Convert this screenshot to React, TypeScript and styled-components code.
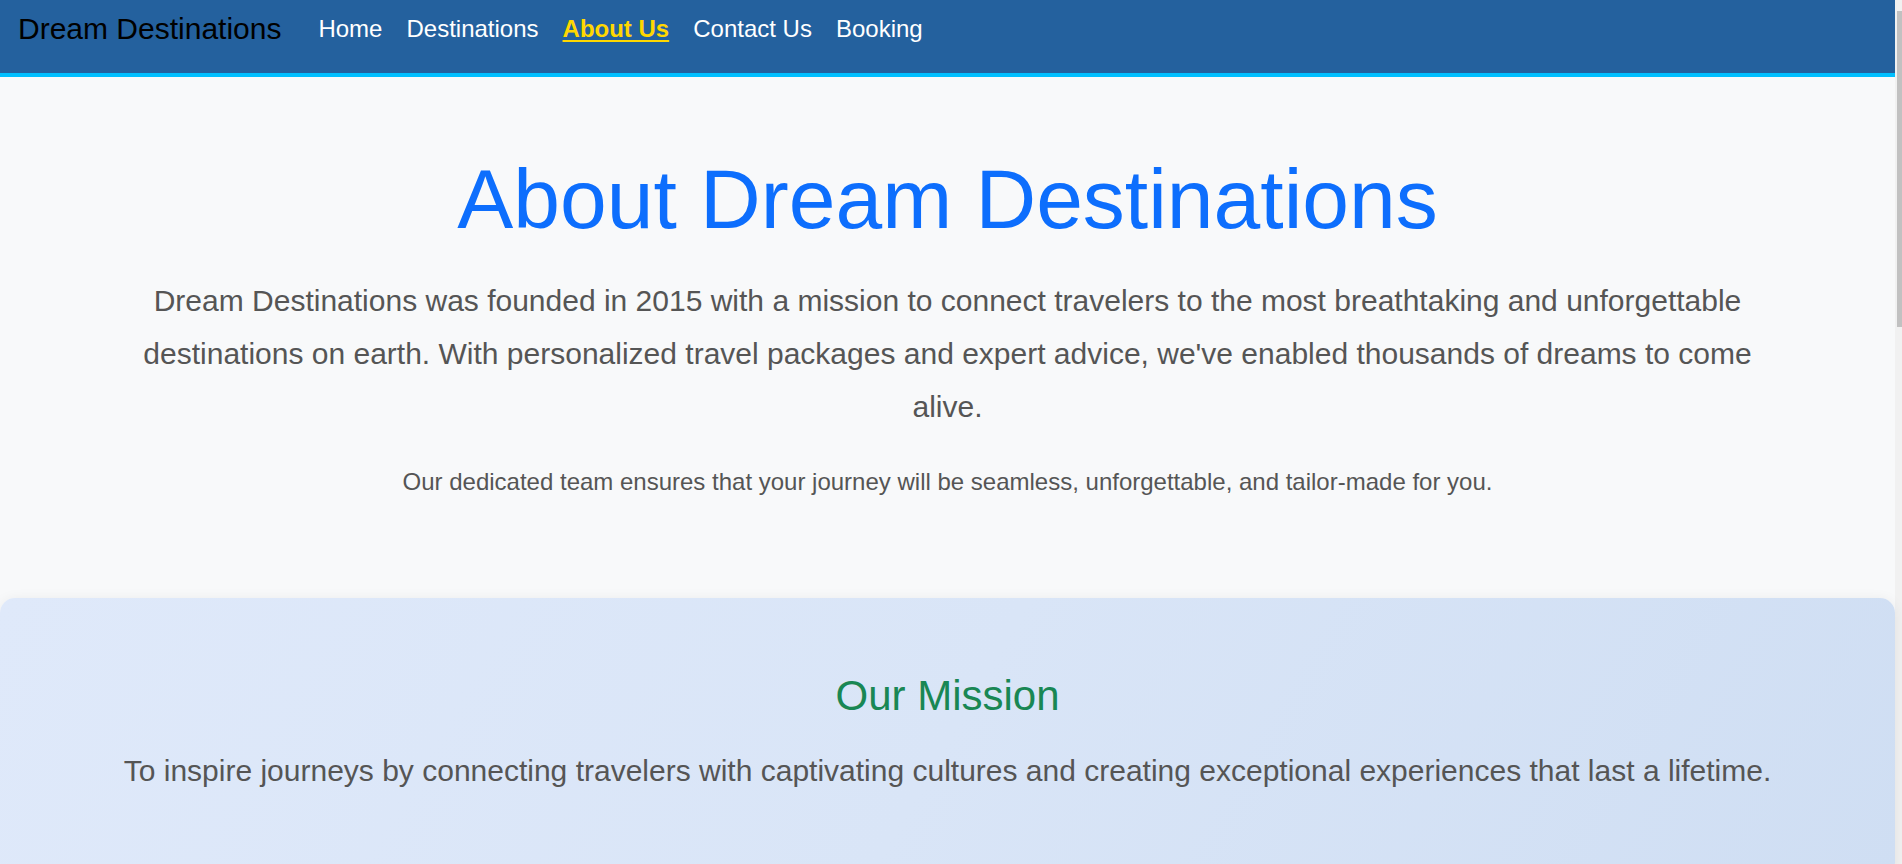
import React from "react";
import styled, { createGlobalStyle } from "styled-components";

const GlobalStyle = createGlobalStyle`
  html {
    scrollbar-width: none;
  }
  html::-webkit-scrollbar { display: none; }
  html, body {
    margin: 0;
    padding: 0;
    background: #f1f1f1;
    font-family: "Liberation Sans", Arial, sans-serif;
  }
  * { box-sizing: border-box; }
`;

const Page = styled.div`
  width: calc(100% - 7px);
  min-height: 2360px;
  background: #f8f9fa;
`;

const ScrollThumb = styled.div`
  position: fixed;
  top: 11px;
  right: 0;
  width: 5px;
  height: 316px;
  background: #c1c1c1;
`;

const NavBar = styled.nav`
  height: 77px;
  padding: 10px 18px 25px;
  background: #24619e;
  border-bottom: 4px solid #00bfff;
  display: flex;
  align-items: center;
`;

const Brand = styled.a`
  font-size: 30px;
  color: #000;
  text-decoration: none;
  margin-right: 25px;
  line-height: 38px;
`;

const NavList = styled.ul`
  display: flex;
  list-style: none;
  margin: 0;
  padding: 0;
`;

const NavLink = styled.a<{ $active?: boolean }>`
  display: block;
  padding: 0 12px;
  font-size: 24px;
  line-height: 38px;
  color: ${(p) => (p.$active ? "#ffd700" : "#ffffff")};
  font-weight: ${(p) => (p.$active ? 700 : 400)};
  text-decoration: ${(p) => (p.$active ? "underline" : "none")};
  text-decoration-thickness: 2px;
  text-underline-offset: 3px;
`;

const About = styled.section`
  padding: 74px 110px 0;
  text-align: center;
`;

const Title = styled.h1`
  margin: 0 0 26px;
  font-size: 84px;
  font-weight: 400;
  color: #0d6efd;
  line-height: 1.15;
`;

const Lead = styled.p`
  margin: 0 auto;
  max-width: 1670px;
  font-size: 30px;
  line-height: 53.4px;
  color: #555;
`;

const Note = styled.p`
  margin: 34px 0 0;
  font-size: 24px;
  line-height: 1.15;
  color: #555;
`;

const MissionCard = styled.section`
  margin-top: 103px;
  padding: 74px 40px 80px;
  border-radius: 15px;
  background: linear-gradient(120deg, #dfe9fa 0%, #d9e5f7 50%, #cfdef3 100%);
  box-shadow: 0 2px 14px rgba(0, 0, 0, 0.07);
  text-align: center;
`;

const MissionTitle = styled.h2`
  margin: 0 0 23px;
  font-size: 42px;
  font-weight: 400;
  line-height: 1.15;
  color: #198754;
`;

const MissionText = styled.p`
  margin: 0;
  font-size: 30px;
  line-height: 54px;
  color: #555;
`;

const links = ["Home", "Destinations", "About Us", "Contact Us", "Booking"];

export default function App() {
  return (
    <Page>
      <GlobalStyle />
      <ScrollThumb />
      <NavBar>
        <Brand href="#">Dream Destinations</Brand>
        <NavList>
          {links.map((l) => (
            <li key={l}>
              <NavLink href="#" $active={l === "About Us"}>
                {l}
              </NavLink>
            </li>
          ))}
        </NavList>
      </NavBar>
      <About>
        <Title>About Dream Destinations</Title>
        <Lead>
          Dream Destinations was founded in 2015 with a mission to connect travelers to the most
          breathtaking and unforgettable destinations on earth. With personalized travel packages
          and expert advice, we've enabled thousands of dreams to come alive.
        </Lead>
        <Note>
          Our dedicated team ensures that your journey will be seamless, unforgettable, and
          tailor-made for you.
        </Note>
      </About>
      <MissionCard>
        <MissionTitle>Our Mission</MissionTitle>
        <MissionText>
          To inspire journeys by connecting travelers with captivating cultures and creating
          exceptional experiences that last a lifetime.
        </MissionText>
      </MissionCard>
    </Page>
  );
}
